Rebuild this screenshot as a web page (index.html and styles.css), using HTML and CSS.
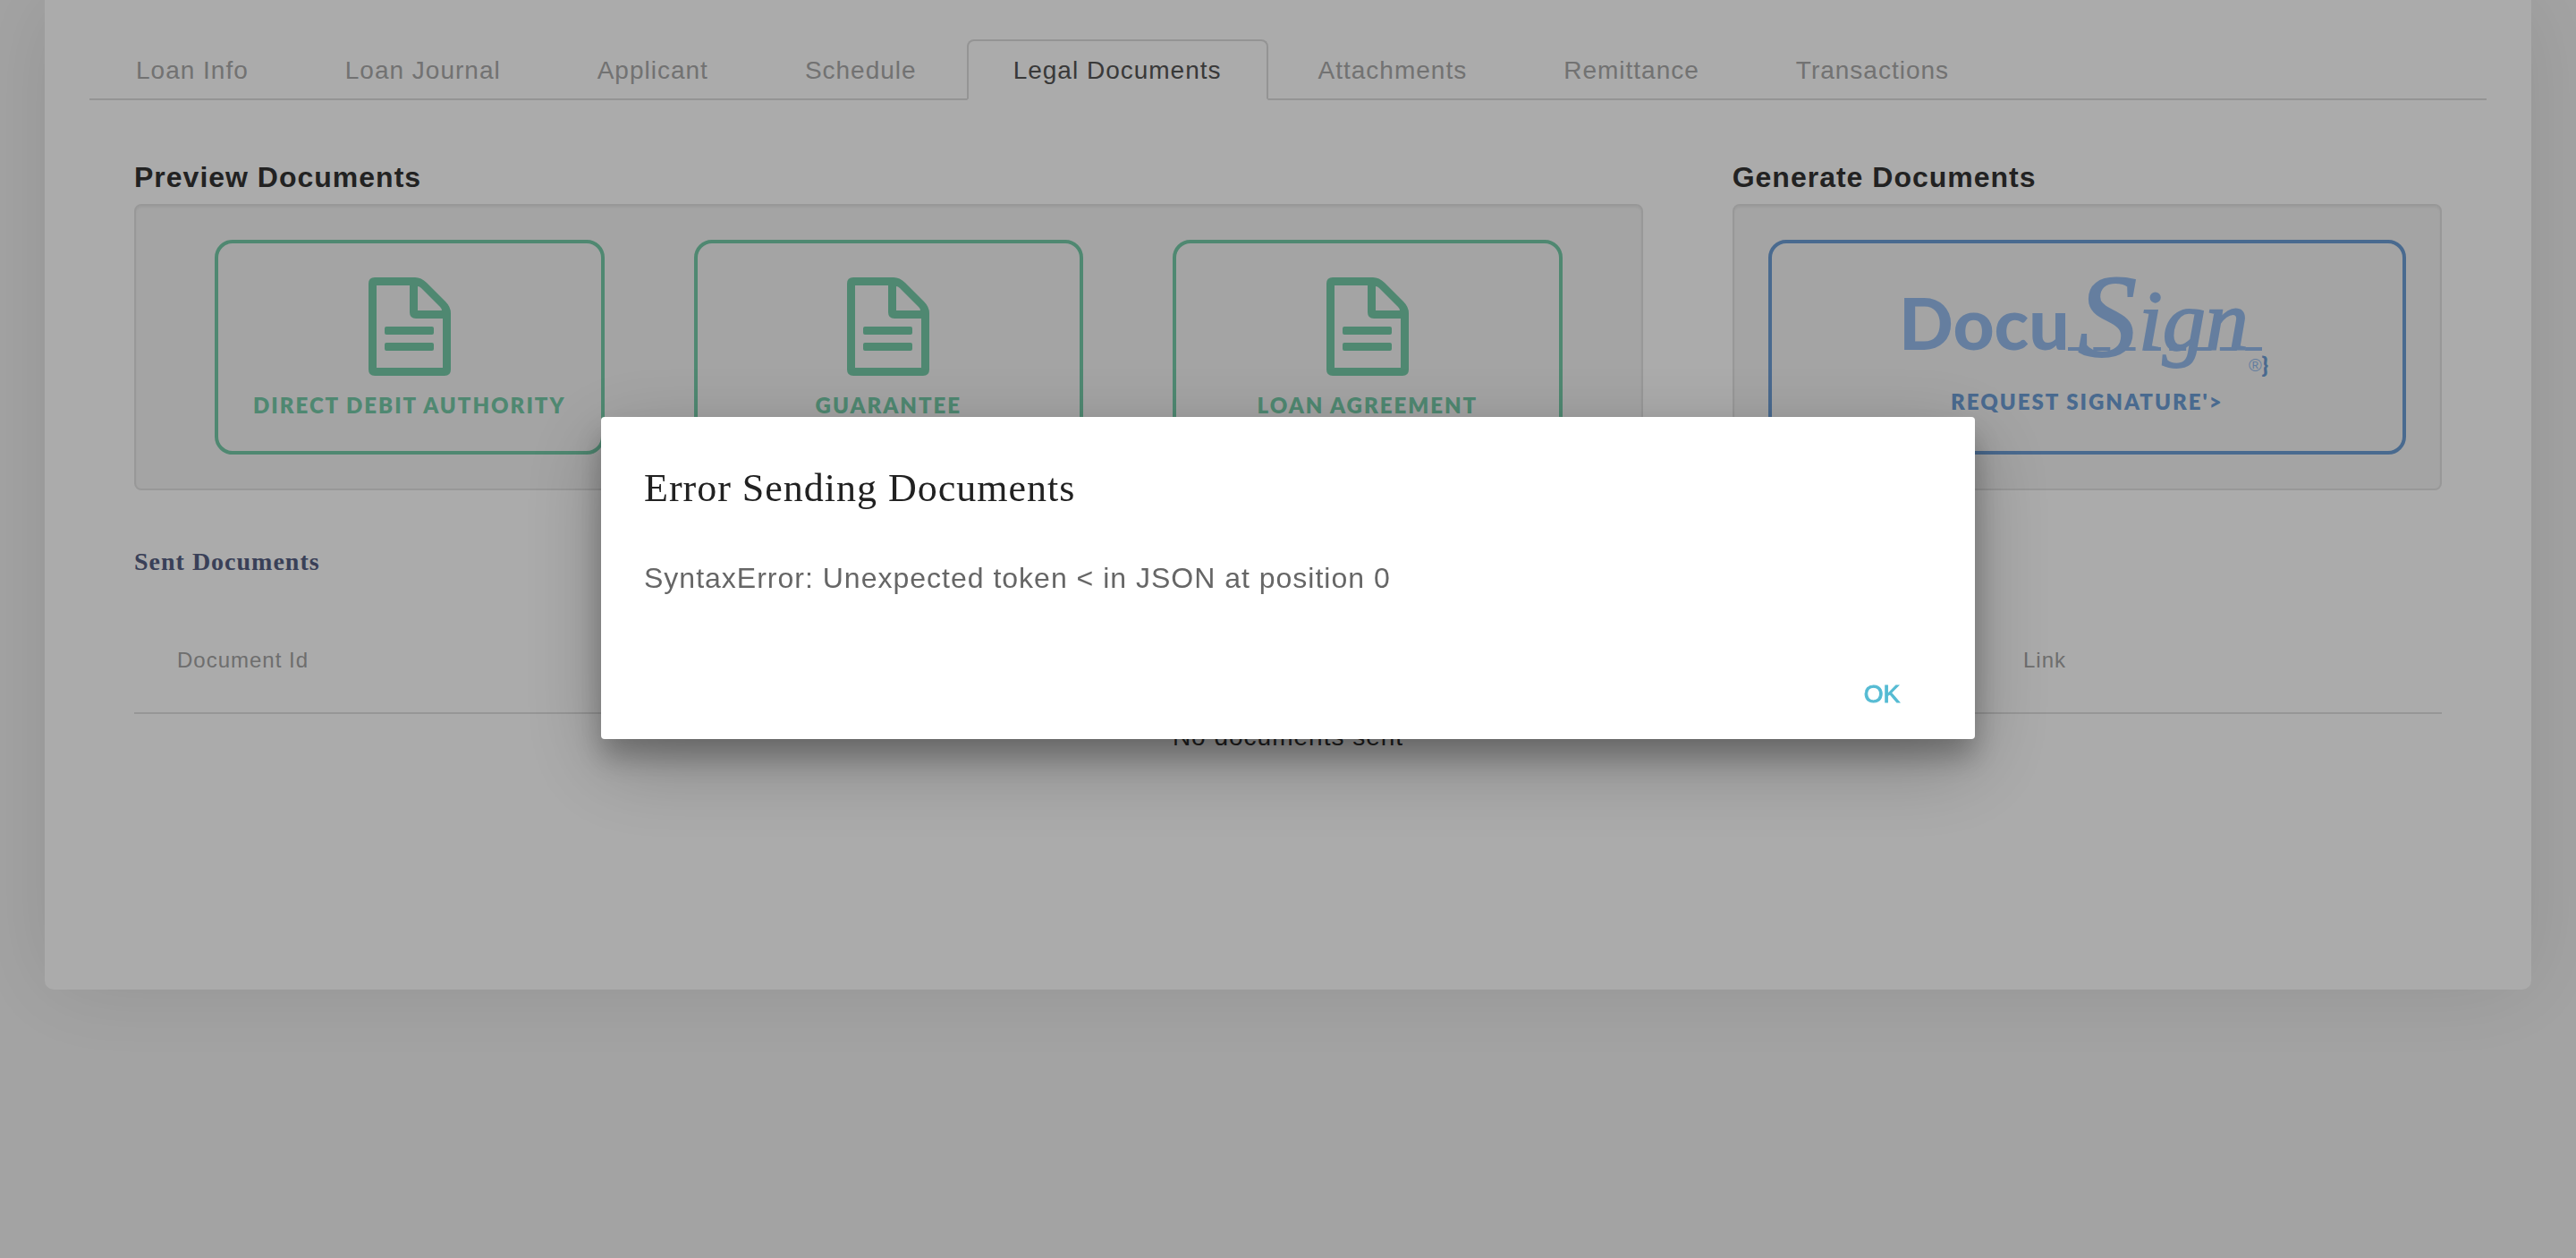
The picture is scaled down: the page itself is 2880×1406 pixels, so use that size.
FILE: index.html
```html
<!DOCTYPE html>
<html lang="en">
<head>
<meta charset="utf-8">
<title>Legal Documents</title>
<link rel="stylesheet" href="styles.css">
</head>
<body>
<svg class="sprite" aria-hidden="true">
  <symbol id="file" viewBox="0 0 92 110">
    <path fill-rule="evenodd" d="M7 0H52Q59 0 65 6L86 27Q92 33 92 40V103Q92 110 85 110H7Q0 110 0 103V7Q0 0 7 0ZM9 9V101H83V46H53Q46 46 46 39V9ZM55 10V37H82Q82 35 80 33L59 12Q57 10 55 10ZM20 55H71Q73 55 73 57V62Q73 64 71 64H20Q18 64 18 62V57Q18 55 20 55ZM20 73H71Q73 73 73 75V80Q73 82 71 82H20Q18 82 18 80V75Q18 73 20 73Z"/>
  </symbol>
</svg>

<main class="card">
  <nav class="tabs">
    <a class="tab" href="#info">Loan Info</a>
    <a class="tab" href="#journal">Loan Journal</a>
    <a class="tab" href="#applicant">Applicant</a>
    <a class="tab" href="#schedule">Schedule</a>
    <a class="tab active" href="#legal" aria-current="page">Legal Documents</a>
    <a class="tab" href="#attachments">Attachments</a>
    <a class="tab" href="#remittance">Remittance</a>
    <a class="tab" href="#transactions">Transactions</a>
  </nav>

  <div class="panels">
    <section class="panel">
      <h2 class="panel-title">Preview Documents</h2>
      <div class="well previews">
        <button class="doc-button" type="button"><svg class="file-icon" aria-hidden="true"><use href="#file"/></svg><span>DIRECT DEBIT AUTHORITY</span></button>
        <button class="doc-button" type="button"><svg class="file-icon" aria-hidden="true"><use href="#file"/></svg><span>GUARANTEE</span></button>
        <button class="doc-button" type="button"><svg class="file-icon" aria-hidden="true"><use href="#file"/></svg><span>LOAN AGREEMENT</span></button>
      </div>
    </section>
    <section class="panel">
      <h2 class="panel-title">Generate Documents</h2>
      <div class="well">
        <button class="doc-button sign-button" type="button">
          <span class="logo-row">
            <svg class="logo" viewBox="0 0 400 114">
              <text class="logo-docu" x="-6" y="79">Docu</text>
              <text class="logo-s" x="194" y="86">S</text>
              <text class="logo-ign" x="262" y="79">ign</text>
              <path class="logo-line" d="M183 78H400"/>
              <text class="logo-reg" x="385" y="103">®</text>
            </svg>
            <span class="brace">}</span>
          </span>
          <span>REQUEST SIGNATURE'&gt;</span>
        </button>
      </div>
    </section>
  </div>

  <section class="sent">
    <h3 class="sent-title">Sent Documents</h3>
    <table class="sent-table">
      <thead><tr><th class="col-id" scope="col">Document Id</th><th scope="col">Link</th></tr></thead>
      <tbody><tr><td colspan="2">No documents sent</td></tr></tbody>
    </table>
  </section>
</main>

<div class="scrim">
  <div class="dialog" role="alertdialog" aria-labelledby="dialog-title" aria-describedby="dialog-text">
    <h3 class="dialog-title" id="dialog-title">Error Sending Documents</h3>
    <p class="dialog-text" id="dialog-text">SyntaxError: Unexpected token &lt; in JSON at position 0</p>
    <div class="dialog-actions"><button class="ok" type="button">OK</button></div>
  </div>
</div>
</body>
</html>
```
FILE: styles.css
```css
* { box-sizing: border-box; }

body {
  margin: 0;
  min-height: 100vh;
  background: #f4f4f4;
  color: #333;
  font-family: "Liberation Sans", Arial, sans-serif;
  font-size: 28px;
  line-height: 40px;
  letter-spacing: 1px;
}

h2, h3, p { margin: 0; }
button { font: inherit; letter-spacing: inherit; cursor: pointer; }
.sprite { display: none; }

.card {
  margin: 0 50px;
  padding: 44px 50px 256px;
  background: #fff;
  border-radius: 0 0 10px 10px;
  box-shadow: 0 0 100px rgba(0, 0, 0, .1);
}

/* Tabs */
.tabs {
  display: flex;
  gap: 4px;
  border-bottom: 2px solid #ddd;
}
.tab {
  margin-bottom: -2px;
  padding: 13px 50px 11px;
  border: 2px solid transparent;
  border-radius: 8px 8px 0 0;
  color: #aaa;
  text-decoration: none;
}
.tab.active {
  border-color: #ddd #ddd #fff;
  background: #fff;
  color: #555;
}

/* Document panels */
.panels {
  display: grid;
  grid-template-columns: 2fr 1fr;
  margin-top: 68px;
}
.panel { padding: 0 50px; }
.panel-title {
  margin-bottom: 12px;
  font-size: 32px;
  line-height: 36px;
}
.well {
  padding: 38px;
  border: 2px solid #e3e3e3;
  border-radius: 8px;
  background: #f5f5f5;
  box-shadow: inset 0 2px 2px rgba(0, 0, 0, .05);
}
.previews {
  display: grid;
  grid-template-columns: repeat(3, 1fr);
  gap: 100px;
  padding: 38px 88px;
}
.doc-button {
  display: flex;
  flex-direction: column;
  align-items: center;
  gap: 17px;
  width: 100%;
  padding: 38px 0 35px;
  border: 4px solid #76cba9;
  border-radius: 20px;
  background: transparent;
  color: #76cba9;
  font-family: Lato, sans-serif;
  font-size: 24px;
  font-weight: 800;
  line-height: 32px;
  letter-spacing: 2px;
}
.file-icon {
  width: 92px;
  height: 110px;
  fill: currentColor;
}
.sign-button {
  gap: 7px;
  padding: 40px 0 39px;
  border-color: #6e9ed5;
  color: #6e9ed5;
}
.logo-row { display: flex; align-items: flex-end; }
.logo {
  width: 400px;
  height: 114px;
  overflow: visible;
  fill: #97bdee;
  letter-spacing: 0;
}
.logo-docu { font: 900 80px Lato, sans-serif; }
.logo-s, .logo-ign { stroke: #97bdee; stroke-width: 2; }
.logo-s { font: italic 132px "Liberation Serif", serif; }
.logo-ign { font: italic 96px "Liberation Serif", serif; }
.logo-reg { font: 20px "Liberation Sans", sans-serif; }
.logo-line { stroke: #97bdee; stroke-width: 4; stroke-dasharray: 19 9.3; }
.brace { padding-bottom: 2px; }

/* Sent documents */
.sent { padding: 64px 50px 0; }
.sent-title {
  color: #566083;
  font-family: "Liberation Serif", "Times New Roman", serif;
  font-size: 28px;
  line-height: 32px;
}
.sent-table {
  width: 100%;
  margin-top: 36px;
  border-collapse: collapse;
  table-layout: fixed;
}
.sent-table th {
  padding: 42px 48px;
  border-bottom: 2px solid #e0e0e0;
  color: #a4a4a4;
  font-size: 24px;
  font-weight: 400;
  line-height: 32px;
  text-align: left;
}
.sent-table .col-id { width: 80%; }
.sent-table td { padding: 6px; text-align: center; }

/* Error dialog */
.scrim {
  position: fixed;
  inset: 0;
  display: flex;
  justify-content: center;
  align-items: flex-start;
  padding-top: 466px;
  background: rgba(0, 0, 0, .33);
}
.dialog {
  width: 75%;
  max-width: 1536px;
  padding: 48px 48px 14px;
  border-radius: 4px;
  background: #fff;
  box-shadow: 0 28px 90px rgba(0, 0, 0, .25), 0 20px 32px rgba(0, 0, 0, .26);
}
.dialog-title {
  color: #212121;
  font-family: "Liberation Serif", "Times New Roman", serif;
  font-size: 44px;
  font-weight: 400;
  line-height: 64px;
}
.dialog-text {
  margin-top: 44px;
  color: #666;
  font-size: 32px;
  line-height: 48px;
}
.dialog-actions {
  display: flex;
  justify-content: flex-end;
  margin: 70px -32px 0 0;
}
.ok {
  width: 176px;
  padding: 0;
  border: 0;
  background: transparent;
  color: #55bbd3;
  -webkit-text-stroke: 1px #55bbd3;
  line-height: 72px;
  letter-spacing: 0;
}
```
